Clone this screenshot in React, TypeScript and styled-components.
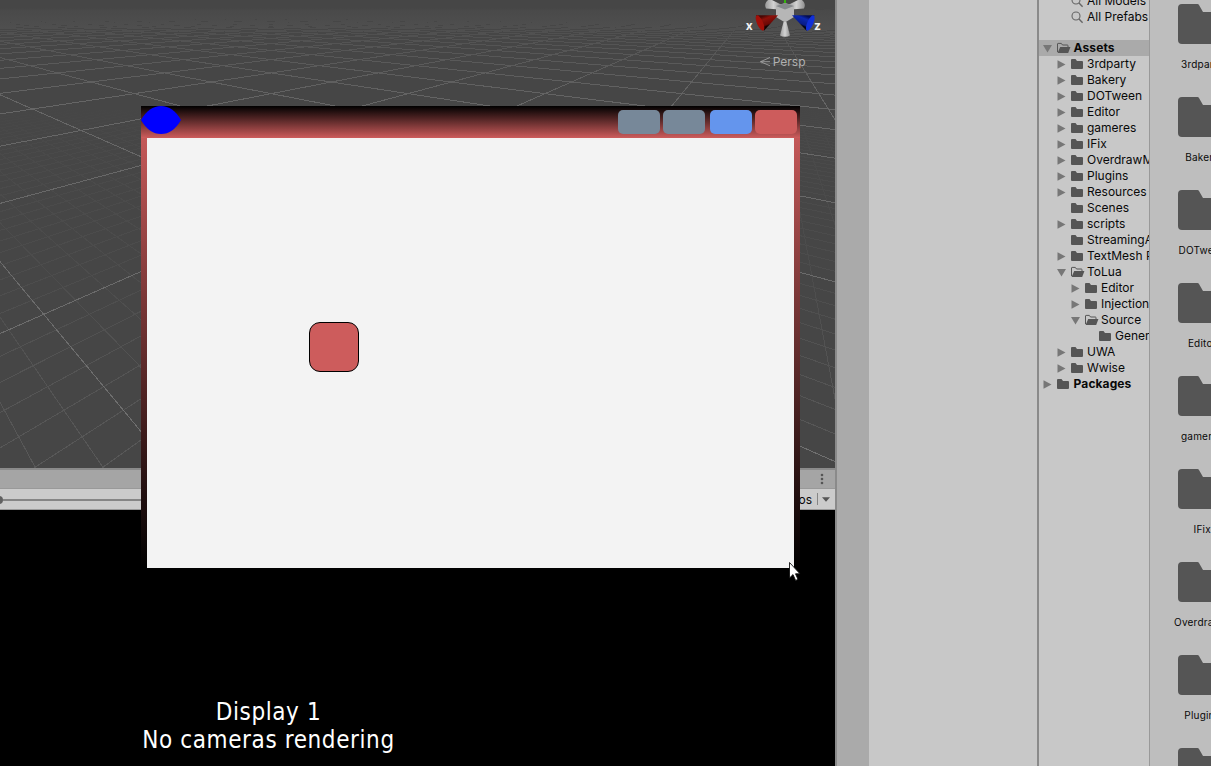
import React from "react";
import styled, { createGlobalStyle } from "styled-components";

const GlobalStyle = createGlobalStyle`
  *, *::before, *::after { box-sizing: border-box; }
  body {
    margin: 0;
    overflow: hidden;
    font-family: Inter, "Liberation Sans", sans-serif;
    font-size: 12px;
    color: #090909;
  }
`;

const Editor = styled.div`
  position: relative;
  display: flex;
  width: 1211px;
  height: 766px;
  overflow: hidden;
  background: #c8c8c8;
`;

const Views = styled.div`
  display: flex;
  flex-direction: column;
  width: 835px;
  flex: none;
`;

const SceneView = styled.div`
  height: 468px;
  background: #464646;
  svg { display: block; }
`;

const TabBar = styled.div`
  display: flex;
  justify-content: flex-end;
  align-items: center;
  height: 21px;
  padding-right: 11px;
  border-top: 2px solid #8a8a8a;
  border-bottom: 1px solid #999999;
  background: #a5a5a5;
`;

const Toolbar = styled.div`
  display: flex;
  align-items: center;
  height: 21px;
  border-bottom: 1px solid #999999;
  background: #cbcbcb;
`;

const Knob = styled.div`
  width: 8px;
  height: 8px;
  margin: 2px 0 0 -5px;
  border-radius: 50%;
  background: #616161;
  flex: none;
`;

const Track = styled.div`
  width: 300px;
  height: 2px;
  margin-top: 2px;
  background: #858585;
`;

const GizmosButton = styled.div`
  display: flex;
  align-items: center;
  gap: 5px;
  margin-left: auto;
  padding-right: 5px;
`;

const Divider = styled.div`
  width: 1px;
  height: 12px;
  margin-right: -1px;
  background: #858585;
`;

const GameView = styled.div`
  flex: 1;
  padding-top: 188px;
  background: #000;
`;

const GameMessage = styled.div`
  width: 537px;
  color: #fff;
  font-family: "DejaVu Sans Condensed", "DejaVu Sans", sans-serif;
  font-stretch: condensed;
  font-size: 24px;
  line-height: 28px;
  letter-spacing: 0.6px;
  text-align: center;
  white-space: nowrap;
`;

const Splitter = styled.div`
  width: 2px;
  flex: none;
  background: #8a8a8a;
`;

const Gutter = styled.div`
  width: 32px;
  flex: none;
  background: #aaaaaa;
`;

const Inspector = styled.div`
  width: 168px;
  flex: none;
  background: #c8c8c8;
`;

const Tree = styled.div`
  width: 111px;
  flex: none;
  overflow: hidden;
  border-right: 1px solid #999999;
  background: #c8c8c8;
`;

const Favorites = styled.div`
  margin-top: -7px;
  padding-bottom: 15px;
`;

const TreeRow = styled.div<{ $depth: number; $selected?: boolean; $bold?: boolean }>`
  display: flex;
  align-items: center;
  height: 16px;
  padding-left: ${(p) => 4 + p.$depth * 14}px;
  background: ${(p) => (p.$selected ? "#aaaaaa" : "transparent")};
  font-weight: ${(p) => (p.$bold ? 700 : 400)};
  letter-spacing: ${(p) => (p.$bold ? 0.1 : 0)}px;
  white-space: nowrap;
  svg { flex: none; }
`;

const TreeLabel = styled.span<{ $bold?: boolean }>`
  padding: 0 0 2px ${(p) => (p.$bold ? 0.6 : 0)}px;
`;

const Arrow = styled.span`
  display: flex;
  width: 14px;
  flex: none;
`;

const RowIcon = styled.span`
  display: flex;
  width: 16px;
  flex: none;
`;

const AssetGrid = styled.div`
  flex: 1;
  overflow: hidden;
  padding: 4px 0 0 22px;
  background: #bebebe;
`;

const AssetCell = styled.div`
  display: flex;
  flex-direction: column;
  align-items: center;
  width: 60px;
  height: 93px;
  font-size: 10px;
  letter-spacing: 0.2px;
  white-space: nowrap;
  svg { flex: none; }
`;

const AssetName = styled.div`
  margin-top: 13px;
  padding-left: 0.5px;
  line-height: 15px;
`;

const FloatingWindow = styled.div`
  position: absolute;
  left: 141px;
  top: 106px;
  display: flex;
  flex-direction: column;
  width: 659px;
  height: 462px;
`;

const TitleBar = styled.div`
  display: flex;
  align-items: flex-start;
  height: 32px;
  padding-right: 3px;
  background: linear-gradient(#000, #cd5c5c);
`;

const WindowButtons = styled.div`
  display: flex;
  gap: 3px;
  margin: 4px 0 0 auto;
`;

const WindowButton = styled.div<{ $color: string; $gap?: number }>`
  width: 42px;
  height: 24px;
  margin-left: ${(p) => p.$gap ?? 0}px;
  border-radius: 5px;
  background: ${(p) => p.$color};
`;

const WindowFrame = styled.div`
  display: flex;
  flex: 1;
  padding: 0 6px;
  background: linear-gradient(#c45858 0, #000 430px);
`;

const WindowBody = styled.div`
  flex: 1;
  padding: 184px 0 0 162px;
  background: #f3f3f3;
`;

const Block = styled.div`
  width: 50px;
  height: 50px;
  border: 1px solid #000;
  border-radius: 11px;
  background: #cd5c5c;
`;

const Pointer = styled.svg`
  position: absolute;
  left: 788px;
  top: 561px;
`;

/* Ground grid: each family of parallels meets at a vanishing point on the horizon. */
const HORIZON = -1;
const REACH = 900;
const STEP = 1.4465;
const LEFT = { x: -218, dir: 1, first: 0.83 };
const RIGHT = { x: 760, dir: -1, first: 0.825 };

function family(vp: typeof LEFT, from: number, to: number, step: number, skip: number) {
  let d = "";
  for (let i = from; i <= to; i++) {
    if (skip && i % skip === 0) continue;
    const run = (vp.first + i * step) * vp.dir;
    d += `M${vp.x} ${HORIZON}L${(vp.x + run * REACH).toFixed(1)} ${HORIZON + REACH}`;
  }
  return d;
}

const majorLines = family(LEFT, -2, 64, STEP, 0) + family(RIGHT, -8, 64, STEP, 0);
const minorLines = family(LEFT, -9, 75, STEP / 10, 10) + family(RIGHT, -24, 75, STEP / 10, 10);

function Scene() {
  return (
    <svg width="835" height="468" viewBox="0 0 835 468">
      <defs>
        <linearGradient id="majorFade" gradientUnits="userSpaceOnUse" x1="0" y1="0" x2="0" y2="468">
          <stop offset="0.017" stopColor="#8a8a8a" stopOpacity="0" />
          <stop offset="0.022" stopColor="#8a8a8a" stopOpacity="0.05" />
          <stop offset="0.06" stopColor="#8a8a8a" stopOpacity="0.13" />
          <stop offset="0.12" stopColor="#8a8a8a" stopOpacity="0.26" />
          <stop offset="0.22" stopColor="#8a8a8a" stopOpacity="0.47" />
          <stop offset="1" stopColor="#8a8a8a" stopOpacity="0.62" />
        </linearGradient>
        <linearGradient id="minorFade" gradientUnits="userSpaceOnUse" x1="0" y1="0" x2="0" y2="468">
          <stop offset="0.23" stopColor="#8a8a8a" stopOpacity="0" />
          <stop offset="0.3" stopColor="#8a8a8a" stopOpacity="0.05" />
          <stop offset="0.6" stopColor="#8a8a8a" stopOpacity="0.1" />
          <stop offset="0.78" stopColor="#8a8a8a" stopOpacity="0.2" />
          <stop offset="1" stopColor="#8a8a8a" stopOpacity="0.27" />
        </linearGradient>
        <linearGradient id="redCone" gradientUnits="userSpaceOnUse" x1="766" y1="15" x2="770" y2="25">
          <stop offset="0" stopColor="#4a0704" />
          <stop offset="0.3" stopColor="#8d100a" />
          <stop offset="0.85" stopColor="#6a0805" />
          <stop offset="1" stopColor="#150100" />
        </linearGradient>
        <linearGradient id="blueCone" gradientUnits="userSpaceOnUse" x1="804" y1="15" x2="800" y2="25">
          <stop offset="0" stopColor="#040d52" />
          <stop offset="0.3" stopColor="#0b27b0" />
          <stop offset="0.85" stopColor="#081c85" />
          <stop offset="1" stopColor="#010414" />
        </linearGradient>
        <linearGradient id="greyCone">
          <stop offset="0" stopColor="#9a9a9a" />
          <stop offset="0.5" stopColor="#d2d2d2" />
          <stop offset="1" stopColor="#8e8e8e" />
        </linearGradient>
      </defs>
      <g fill="none" shapeRendering="crispEdges">
        <path d={minorLines} stroke="url(#minorFade)" />
        <path d={majorLines} stroke="url(#majorFade)" />
      </g>
      <path d="M784 0h2v4h-2z" fill="#35b50c" />
      <path d="M779 9.5L766 8.5Q763.5 4 768 0H772L782 5Z" fill="url(#greyCone)" />
      <path d="M791 9.5L804 8.5Q806.5 4 802 0H798L788 5Z" fill="url(#greyCone)" />
      <path d="M776 6L785 3L794 6V17L785 22.5L776 17Z" fill="#b6b6b6" />
      <path d="M776 6L785 3L794 6L785 9.5Z" fill="#85888c" />
      <path d="M783.5 22H786.5L790 35.5Q785 38 780 35.5Z" fill="url(#greyCone)" />
      <path d="M778 15.2L756 15.2L764 30.8Z" fill="url(#redCone)" />
      <ellipse cx="760" cy="23" rx="3" ry="8.3" transform="rotate(-24 760 23)" fill="#a20f08" />
      <path d="M792 15.2L814.5 15.2L806.5 30.8Z" fill="url(#blueCone)" />
      <ellipse cx="810.3" cy="23" rx="3" ry="8.3" transform="rotate(24 810.3 23)" fill="#102fd8" />
      <g fill="#f2f2f2" fontFamily="Inter, sans-serif" fontSize="12" fontWeight="700">
        <text x="745.7" y="30.3">x</text>
        <text x="814" y="30.3">z</text>
      </g>
      <path d="M770 57.5L760.5 61.7L770 65.8M770 61.7H760.5" fill="none" stroke="#aaa" strokeWidth="0.8" />
      <text x="772.7" y="66" fill="#b0b0b0" fontFamily="Inter, sans-serif" fontSize="12">Persp</text>
    </svg>
  );
}

function Triangle({ open }: { open?: boolean }) {
  return (
    <svg width="9" height="9" viewBox="0 0 9 9">
      <path d={open ? "M0 1H9L4.5 8.5Z" : "M0.5 0.3L8.5 4.5L0.5 8.8Z"} fill="#777" />
    </svg>
  );
}

function Folder({ open }: { open?: boolean }) {
  return open ? (
    <svg width="14" height="12" viewBox="0 0 14 12">
      <path d="M0.5 10V2Q0.5 1.4 1.1 1.4H4.3L5.5 3H10.5Q11 3 11 4V5" fill="none" stroke="#555" />
      <path d="M3.2 5H13.4L11.2 11H0.6Z" fill="#555" />
    </svg>
  ) : (
    <svg width="12" height="12" viewBox="0 0 12 12">
      <path d="M0 2Q0 1 1 1H4.5L6 3H11Q12 3 12 4V10Q12 11 11 11H1Q0 11 0 10Z" fill="#555" />
    </svg>
  );
}

function SearchIcon() {
  return (
    <svg width="13" height="13" viewBox="0 0 13 13">
      <circle cx="5" cy="5" r="4" fill="none" stroke="#666" strokeWidth="1.1" />
      <path d="M8 8.1L11.6 11.8" stroke="#666" strokeWidth="1.4" />
    </svg>
  );
}

function LargeFolder() {
  return (
    <svg width="48" height="40" viewBox="0 0 48 40">
      <path d="M0 4Q0 0 4 0H19.5Q20.5 0 21 1L25 8H44Q48 8 48 12V36Q48 40 44 40H4Q0 40 0 36Z" fill="#555" />
    </svg>
  );
}

type Node = { name: string; depth: number; state?: "open" | "closed"; bold?: boolean; selected?: boolean };

const nodes: Node[] = [
  { name: "Assets", depth: 0, state: "open", bold: true, selected: true },
  { name: "3rdparty", depth: 1, state: "closed" },
  { name: "Bakery", depth: 1, state: "closed" },
  { name: "DOTween", depth: 1, state: "closed" },
  { name: "Editor", depth: 1, state: "closed" },
  { name: "gameres", depth: 1, state: "closed" },
  { name: "IFix", depth: 1, state: "closed" },
  { name: "OverdrawM", depth: 1, state: "closed" },
  { name: "Plugins", depth: 1, state: "closed" },
  { name: "Resources", depth: 1, state: "closed" },
  { name: "Scenes", depth: 1 },
  { name: "scripts", depth: 1, state: "closed" },
  { name: "StreamingA", depth: 1 },
  { name: "TextMesh P", depth: 1, state: "closed" },
  { name: "ToLua", depth: 1, state: "open" },
  { name: "Editor", depth: 2, state: "closed" },
  { name: "Injection", depth: 2, state: "closed" },
  { name: "Source", depth: 2, state: "open" },
  { name: "Gener", depth: 3 },
  { name: "UWA", depth: 1, state: "closed" },
  { name: "Wwise", depth: 1, state: "closed" },
  { name: "Packages", depth: 0, state: "closed", bold: true },
];

const assets = ["3rdparty", "Bakery", "DOTween", "Editor", "gameres", "IFix", "Overdraw...", "Plugins", ""];

export default function App() {
  return (
    <Editor>
      <GlobalStyle />
      <Views>
        <SceneView>
          <Scene />
        </SceneView>
        <TabBar>
          <svg width="4" height="12" viewBox="0 0 4 12" fill="#555">
            <circle cx="2" cy="2" r="1.3" />
            <circle cx="2" cy="6" r="1.3" />
            <circle cx="2" cy="10" r="1.3" />
          </svg>
        </TabBar>
        <Toolbar>
          <Knob />
          <Track />
          <GizmosButton>
            Gizmos
            <Divider />
            <svg width="8" height="5" viewBox="0 0 8 5">
              <path d="M0 0.3H8L4 4.7Z" fill="#555" />
            </svg>
          </GizmosButton>
        </Toolbar>
        <GameView>
          <GameMessage>Display 1</GameMessage>
          <GameMessage>No cameras rendering</GameMessage>
        </GameView>
      </Views>
      <Splitter />
      <Gutter />
      <Inspector />
      <Splitter />
      <Tree>
        <Favorites>
          {["All Models", "All Prefabs"].map((name) => (
            <TreeRow key={name} $depth={1}>
              <Arrow />
              <RowIcon>
                <SearchIcon />
              </RowIcon>
              <TreeLabel>{name}</TreeLabel>
            </TreeRow>
          ))}
        </Favorites>
        {nodes.map((n, i) => (
          <TreeRow key={i} $depth={n.depth} $selected={n.selected} $bold={n.bold}>
            <Arrow>{n.state && <Triangle open={n.state === "open"} />}</Arrow>
            <RowIcon>
              <Folder open={n.state === "open"} />
            </RowIcon>
            <TreeLabel $bold={n.bold}>{n.name}</TreeLabel>
          </TreeRow>
        ))}
      </Tree>
      <AssetGrid>
        {assets.map((name, i) => (
          <AssetCell key={i}>
            <LargeFolder />
            <AssetName>{name}</AssetName>
          </AssetCell>
        ))}
      </AssetGrid>
      <FloatingWindow>
        <TitleBar>
          <svg width="40" height="28" viewBox="0 0 40 28">
            <path d="M0 14Q8 0 20 0Q32 0 40 14Q32 28 20 28Q8 28 0 14Z" fill="#00f" />
          </svg>
          <WindowButtons>
            <WindowButton $color="#778899" />
            <WindowButton $color="#778899" />
            <WindowButton $color="#6495ed" $gap={2} />
            <WindowButton $color="#cd5c5c" />
          </WindowButtons>
        </TitleBar>
        <WindowFrame>
          <WindowBody>
            <Block />
          </WindowBody>
        </WindowFrame>
      </FloatingWindow>
      <Pointer width="14" height="22" viewBox="0 0 14 22">
        <path d="M1.5 1.5V17L5 13.6L7.6 19.4L10 18.4L7.5 12.8H12Z" fill="#fff" stroke="#111" strokeWidth="0.9" />
      </Pointer>
    </Editor>
  );
}
